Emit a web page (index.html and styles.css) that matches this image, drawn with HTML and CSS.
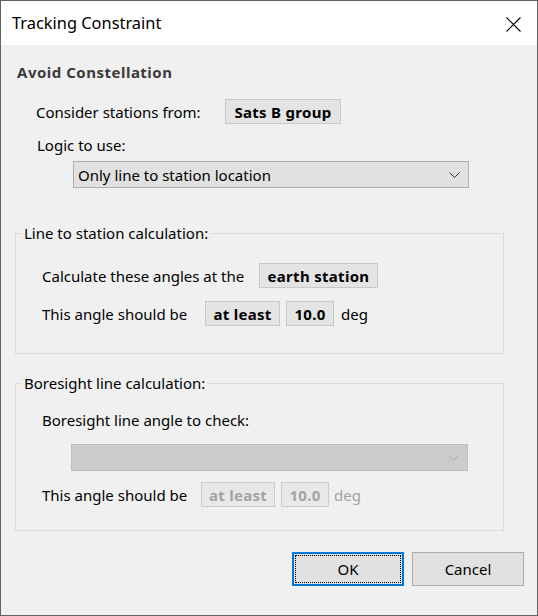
FILE: index.html
```html
<!DOCTYPE html>
<html>
<head>
<meta charset="utf-8">
<link rel="stylesheet" href="styles.css">
</head>
<body>
<div class="window">
  <div class="titlebar">
    <span class="title">Tracking Constraint</span>
    <svg class="close" width="15" height="15" viewBox="0 0 15 15"><path d="M0.5 0.5 L14.5 14.5 M14.5 0.5 L0.5 14.5" stroke="#000" stroke-width="1.1" fill="none"/></svg>
  </div>
  <div class="content">
    <div class="heading">Avoid Constellation</div>
    <div class="row row-sats">
      <span class="label label-sats">Consider stations from:</span>
      <span class="box w-sats">Sats B group</span>
    </div>
    <div class="line logic">Logic to use:</div>
    <div class="combo combo-logic">
      <span class="combo-text">Only line to station location</span>
      <svg class="chev" width="11" height="6" viewBox="0 0 11 6"><path d="M0.5 0.5 L5.5 5.5 L10.5 0.5" stroke="#333" stroke-width="1" fill="none"/></svg>
    </div>

    <fieldset class="group group-1">
      <legend>Line to station calculation:</legend>
      <div class="group-body body-1">
        <div class="row">
          <span class="label label-calc">Calculate these angles at the</span>
          <span class="box w-earth">earth station</span>
        </div>
        <div class="row row-2">
          <span class="label label-angle">This angle should be</span>
          <span class="box w-least">at least</span>
          <span class="box w-num">10.0</span>
          <span class="unit">deg</span>
        </div>
      </div>
    </fieldset>

    <fieldset class="group group-2">
      <legend>Boresight line calculation:</legend>
      <div class="group-body body-2">
        <div class="line bore">Boresight line angle to check:</div>
        <div class="combo combo-disabled">
          <span class="combo-text"></span>
          <svg class="chev" width="11" height="6" viewBox="0 0 11 6"><path d="M0.5 0.5 L5.5 5.5 L10.5 0.5" stroke="#a8a8a8" stroke-width="1" fill="none"/></svg>
        </div>
        <div class="row row-3">
          <span class="label label-angle2">This angle should be</span>
          <span class="box disabled w-least2">at least</span>
          <span class="box disabled w-num">10.0</span>
          <span class="unit unit-disabled">deg</span>
        </div>
      </div>
    </fieldset>

    <div class="buttons">
      <button class="btn btn-default"><span class="focus">OK</span></button>
      <button class="btn">Cancel</button>
    </div>
  </div>
</div>
</body>
</html>
```
FILE: styles.css
```css
* { box-sizing: border-box; }
html, body { margin: 0; padding: 0; }
body {
  font-family: "Noto Sans", "Open Sans", sans-serif;
  font-size: 15px;
  color: #000;
  background: #f0f0f0;
}
.window {
  width: 538px;
  height: 616px;
  border: 1px solid #626262;
  background: #f0f0f0;
  display: flex;
  flex-direction: column;
}
.titlebar {
  height: 44px;
  background: #fff;
  display: flex;
  align-items: center;
  justify-content: space-between;
  padding: 0 16px 0 11px;
}
.title {
  font-size: 16.4px;
  color: #000;
  margin-top: -1px;
}
.close { display: block; margin-top: 2px; }
.content {
  flex: 1;
  display: flex;
  flex-direction: column;
  align-items: flex-start;
}
.heading {
  margin: 17px 0 0 16px;
  line-height: 20px;
  font-weight: bold;
  letter-spacing: 0.5px;
  color: #3a3a3a;
}
.row {
  display: flex;
  align-items: center;
  height: 25px;
}
.row-sats { margin: 17px 0 0 35px; }
.label { white-space: nowrap; }
.label-sats { width: 189px; }
.box {
  height: 25px;
  display: inline-flex;
  align-items: center;
  justify-content: center;
  background: #e4e4e4;
  border: 1px solid #c8c8c8;
  font-weight: bold;
  letter-spacing: 0.3px;
  white-space: nowrap;
}
.w-sats { width: 116px; }
.line { line-height: 20px; }
.logic { margin: 11px 0 0 36px; }
.combo {
  height: 27px;
  display: flex;
  align-items: center;
  justify-content: space-between;
  border: 1px solid #adadad;
  background: #e1e1e1;
  padding: 0 8px 0 4px;
}
.combo-logic { margin: 6px 0 0 72px; width: 396px; }
.chev { display: block; }
.group {
  margin: 0 0 0 14px;
  padding: 0;
  width: 489px;
  border: 1px solid #dcdcdc;
  min-width: 0;
}
.group legend {
  margin-left: 6px;
  padding: 0 2px;
  line-height: 20px;
}
.group-1 { margin-top: 35px; }
.group-2 { margin-top: 19px; }
.group-body { padding: 0 0 0 26px; }
.body-1 { padding-top: 20px; padding-bottom: 27px; }
.body-1 .row-2 { margin-top: 13px; }
.label-calc { width: 217px; }
.label-angle { width: 163px; }
.w-earth { width: 119px; }
.w-least { width: 75px; }
.w-num { width: 48px; margin-left: 6px; }
.unit { margin-left: 7px; }
.body-2 { padding-top: 17px; padding-bottom: 23px; }
.combo-disabled {
  margin: 14px 0 0 29px;
  width: 397px;
  background: #cccccc;
  border-color: #bfbfbf;
}
.row-3 { margin-top: 11px; }
.label-angle2 { width: 159px; }
.w-least2 { width: 74px; }
.row-3 .w-num { margin-left: 6px; }
.disabled {
  color: #a3a3a3;
  background: #e8e8e8;
  border-color: #cccccc;
}
.unit-disabled { color: #a3a3a3; margin-left: 5px; }
.buttons {
  align-self: stretch;
  display: flex;
  justify-content: flex-end;
  gap: 8px;
  margin-top: 21px;
  padding-right: 13px;
}
.btn {
  width: 112px;
  height: 34px;
  background: #e1e1e1;
  border: 1px solid #adadad;
  font-family: "Noto Sans", "Open Sans", sans-serif;
  font-size: 15px;
  color: #000;
  padding: 0;
  display: flex;
  align-items: center;
  justify-content: center;
}
.btn-default {
  border: 2px solid #0078d7;
  padding: 1px;
}
.focus {
  width: 100%;
  height: 100%;
  border: 1px dotted #000;
  display: flex;
  align-items: center;
  justify-content: center;
}
```
